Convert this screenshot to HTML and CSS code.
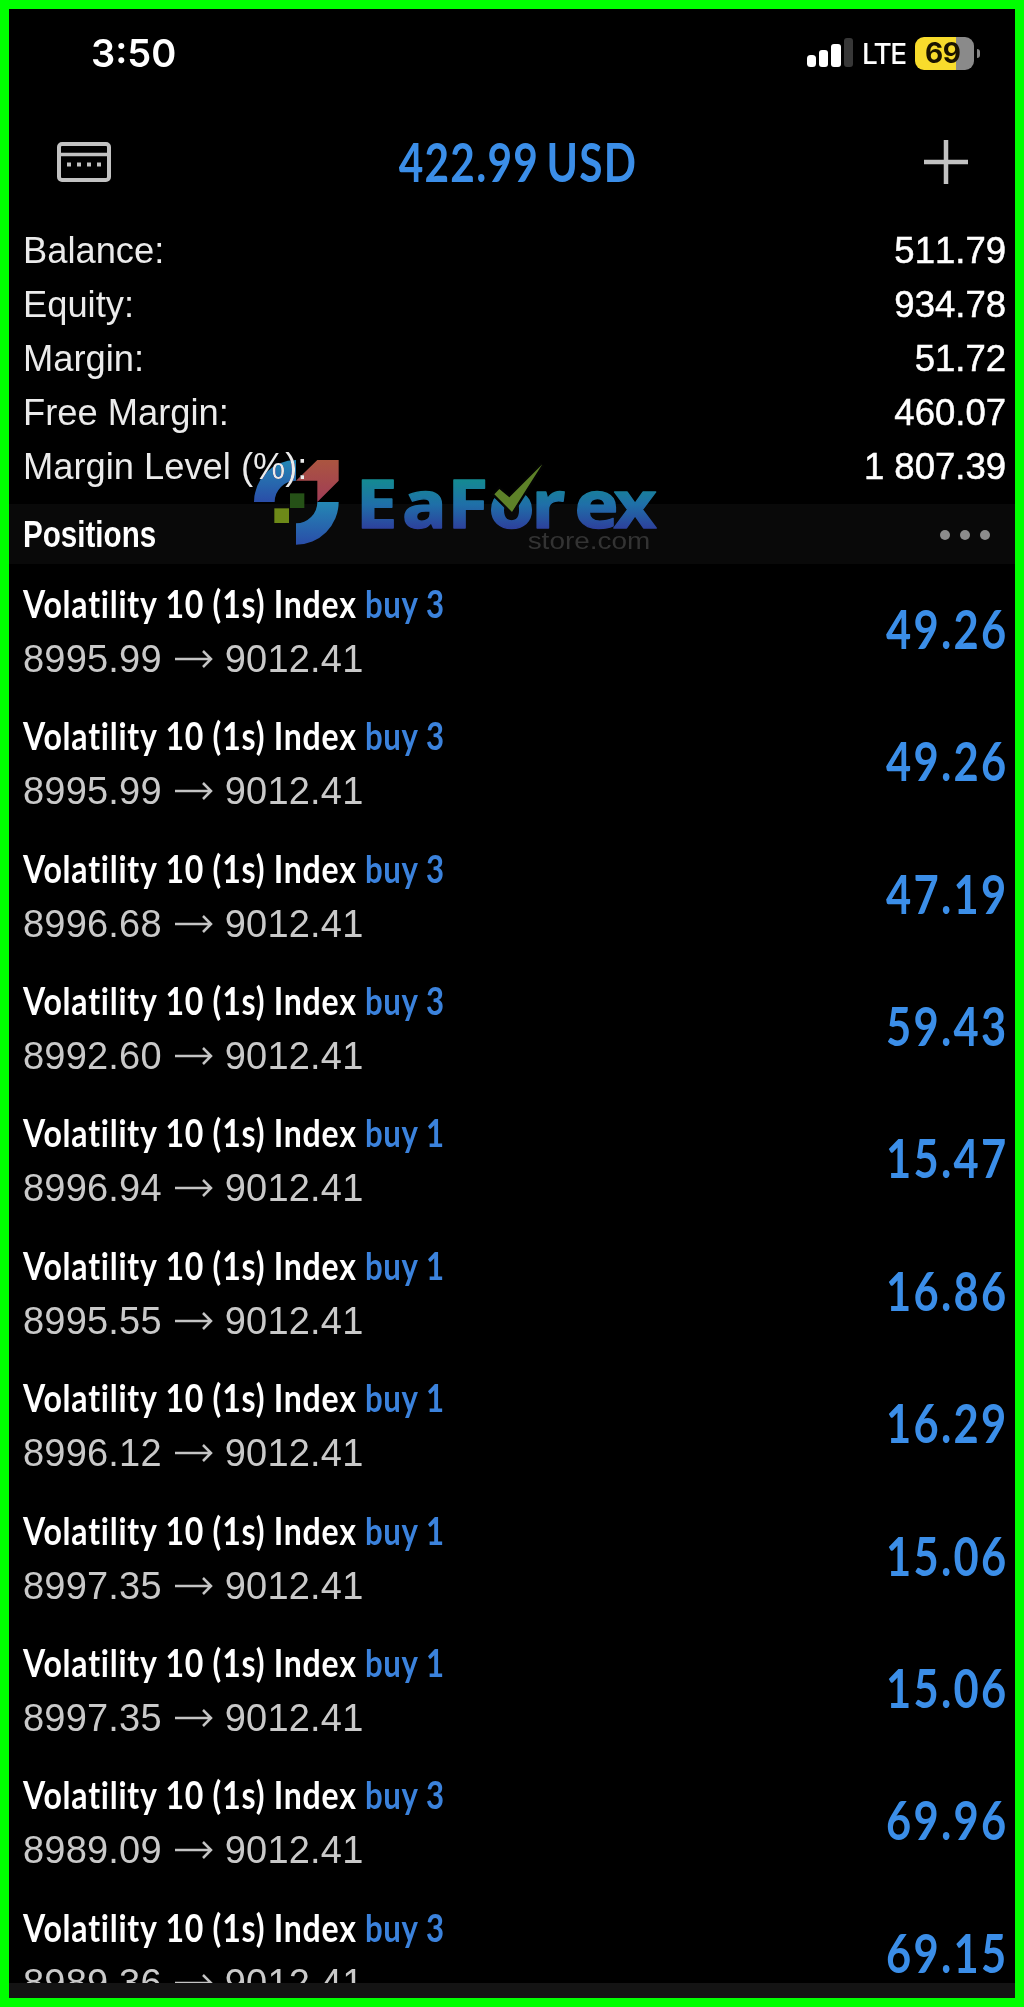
FILE: index.html
```html
<!DOCTYPE html>
<html lang="en">
<head>
  <meta charset="UTF-8" />
  <meta name="viewport" content="width=device-width, initial-scale=1.0" />
  <title>Trade</title>
  <link rel="stylesheet" href="styles.css">
</head>
<body>
  <div class="screen">
    <div class="status-bar">
      <span class="time">3:50</span>
      <div class="status-right">
        <svg class="signal" width="46" height="30" viewBox="0 0 46 30">
          <rect x="0" y="17" width="9" height="12" rx="3.5" fill="#fff"/>
          <rect x="12" y="12" width="9" height="17" rx="3" fill="#fff"/>
          <rect x="24" y="6" width="10" height="23" rx="3" fill="#fff"/>
          <rect x="37" y="0" width="9" height="29" rx="3" fill="#373737"/>
        </svg>
        <span class="lte">LTE</span>
        <div class="battery">69</div>
        <div class="battery-tip"></div>
      </div>
    </div>

    <div class="top-bar">
      <svg width="54" height="40" viewBox="0 0 54 40" fill="none" stroke="#c2c2c2">
        <rect x="2" y="2" width="50" height="36" rx="3" stroke-width="4"/>
        <path d="M3 12.5h48" stroke-width="3.5"/>
        <path d="M10 22.5h4M20 22.5h4M30 22.5h4M40 22.5h4" stroke-width="4"/>
      </svg>
      <span class="profit-total">422.99 USD</span>
      <svg width="44" height="44" viewBox="0 0 44 44" stroke="#c2c2c2" stroke-width="4.5">
        <path d="M22 0v44M0 22h44"/>
      </svg>
    </div>

    <div class="summary">
      <div class="summary-row"><span>Balance:</span><span class="value">511.79</span></div>
      <div class="summary-row"><span>Equity:</span><span class="value">934.78</span></div>
      <div class="summary-row"><span>Margin:</span><span class="value">51.72</span></div>
      <div class="summary-row"><span>Free Margin:</span><span class="value">460.07</span></div>
      <div class="summary-row"><span>Margin Level (%):</span><span class="value">1 807.39</span></div>
    </div>

    <div class="section-bar">
      <span class="section-title">Positions</span>
      <div class="dots"><i></i><i></i><i></i></div>
    </div>

    <div class="positions">
      <div class="position">
        <div class="info">
          <div class="name"><span>Volatility 10 (1s) Index</span><b>buy 3</b></div>
          <div class="price"><span>8995.99</span><svg class="arrow" viewBox="0 0 38 18"><path d="M0 9h36M28 1l8 8-8 8"/></svg><span>9012.41</span></div>
        </div>
        <div class="profit">49.26</div>
      </div>
      <div class="position">
        <div class="info">
          <div class="name"><span>Volatility 10 (1s) Index</span><b>buy 3</b></div>
          <div class="price"><span>8995.99</span><svg class="arrow" viewBox="0 0 38 18"><path d="M0 9h36M28 1l8 8-8 8"/></svg><span>9012.41</span></div>
        </div>
        <div class="profit">49.26</div>
      </div>
      <div class="position">
        <div class="info">
          <div class="name"><span>Volatility 10 (1s) Index</span><b>buy 3</b></div>
          <div class="price"><span>8996.68</span><svg class="arrow" viewBox="0 0 38 18"><path d="M0 9h36M28 1l8 8-8 8"/></svg><span>9012.41</span></div>
        </div>
        <div class="profit">47.19</div>
      </div>
      <div class="position">
        <div class="info">
          <div class="name"><span>Volatility 10 (1s) Index</span><b>buy 3</b></div>
          <div class="price"><span>8992.60</span><svg class="arrow" viewBox="0 0 38 18"><path d="M0 9h36M28 1l8 8-8 8"/></svg><span>9012.41</span></div>
        </div>
        <div class="profit">59.43</div>
      </div>
      <div class="position">
        <div class="info">
          <div class="name"><span>Volatility 10 (1s) Index</span><b>buy 1</b></div>
          <div class="price"><span>8996.94</span><svg class="arrow" viewBox="0 0 38 18"><path d="M0 9h36M28 1l8 8-8 8"/></svg><span>9012.41</span></div>
        </div>
        <div class="profit">15.47</div>
      </div>
      <div class="position">
        <div class="info">
          <div class="name"><span>Volatility 10 (1s) Index</span><b>buy 1</b></div>
          <div class="price"><span>8995.55</span><svg class="arrow" viewBox="0 0 38 18"><path d="M0 9h36M28 1l8 8-8 8"/></svg><span>9012.41</span></div>
        </div>
        <div class="profit">16.86</div>
      </div>
      <div class="position">
        <div class="info">
          <div class="name"><span>Volatility 10 (1s) Index</span><b>buy 1</b></div>
          <div class="price"><span>8996.12</span><svg class="arrow" viewBox="0 0 38 18"><path d="M0 9h36M28 1l8 8-8 8"/></svg><span>9012.41</span></div>
        </div>
        <div class="profit">16.29</div>
      </div>
      <div class="position">
        <div class="info">
          <div class="name"><span>Volatility 10 (1s) Index</span><b>buy 1</b></div>
          <div class="price"><span>8997.35</span><svg class="arrow" viewBox="0 0 38 18"><path d="M0 9h36M28 1l8 8-8 8"/></svg><span>9012.41</span></div>
        </div>
        <div class="profit">15.06</div>
      </div>
      <div class="position">
        <div class="info">
          <div class="name"><span>Volatility 10 (1s) Index</span><b>buy 1</b></div>
          <div class="price"><span>8997.35</span><svg class="arrow" viewBox="0 0 38 18"><path d="M0 9h36M28 1l8 8-8 8"/></svg><span>9012.41</span></div>
        </div>
        <div class="profit">15.06</div>
      </div>
      <div class="position">
        <div class="info">
          <div class="name"><span>Volatility 10 (1s) Index</span><b>buy 3</b></div>
          <div class="price"><span>8989.09</span><svg class="arrow" viewBox="0 0 38 18"><path d="M0 9h36M28 1l8 8-8 8"/></svg><span>9012.41</span></div>
        </div>
        <div class="profit">69.96</div>
      </div>
      <div class="position">
        <div class="info">
          <div class="name"><span>Volatility 10 (1s) Index</span><b>buy 3</b></div>
          <div class="price"><span>8989.36</span><svg class="arrow" viewBox="0 0 38 18"><path d="M0 9h36M28 1l8 8-8 8"/></svg><span>9012.41</span></div>
        </div>
        <div class="profit">69.15</div>
      </div>
    </div>

    <div class="tab-bar"></div>

    <svg class="watermark" viewBox="0 0 1320 390">
      <defs>
        <linearGradient id="blue" x1="0" y1="0" x2="0" y2="1">
          <stop offset="0" stop-color="#2488b4"/>
          <stop offset="1" stop-color="#2a4da8"/>
        </linearGradient>
        <linearGradient id="red" x1="0" y1="0" x2="0" y2="1">
          <stop offset="0" stop-color="#ab5540"/>
          <stop offset="1" stop-color="#a03c57"/>
        </linearGradient>
        <linearGradient id="word" gradientUnits="userSpaceOnUse" x1="0" y1="120" x2="0" y2="268">
          <stop offset="0" stop-color="#148a92"/>
          <stop offset="0.5" stop-color="#1f6fa8"/>
          <stop offset="1" stop-color="#2d3f9c"/>
        </linearGradient>
      </defs>
      <path d="M72 186A126 126 0 0 1 198 60V122A64 64 0 0 0 134 186Z" fill="url(#blue)"/>
      <path d="M262 60H326V122L262 186V122H198Z" fill="url(#red)"/>
      <path d="M326 186A128 128 0 0 1 198 314V250A64 64 0 0 0 262 186Z" fill="url(#blue)"/>
      <path d="M180 160h43v44h-43z" fill="#255117"/>
      <path d="M133 205h44v44h-44z" fill="#6d8918"/>
      <text class="brand" transform="scale(1.12 1)" x="337 461 582 692 808 922 1027" y="264" fill="url(#word)" stroke="url(#word)">EaForex</text>
      <path d="M775 140H860V172L846 216L793 172Z" fill="#000"/>
      <path d="M793 163L808 147L838 172L937 73L846 216Z" fill="#5d8128" stroke="#030303" stroke-width="14" paint-order="stroke"/>
      <text class="store" x="893" y="328" textLength="368" lengthAdjust="spacingAndGlyphs">store.com</text>
    </svg>
  </div>
</body>
</html>
```
FILE: styles.css
```css
* {
  box-sizing: border-box;
  margin: 0;
  padding: 0;
}

body {
  background: #00ff00;
}

.screen {
  position: relative;
  display: flex;
  flex-direction: column;
  width: 1024px;
  height: 2007px;
  border: 9px solid #00ff00;
  background: #000;
  color: #fff;
  font-family: "Liberation Sans", Arial, sans-serif;
  overflow: hidden;
}

.status-bar {
  display: flex;
  justify-content: space-between;
  height: 91px;
  padding: 20px 35px 0 82px;
  flex-shrink: 0;
}

.time {
  font: 600 38px/48px Inter, sans-serif;
}

.status-right {
  display: flex;
  align-items: center;
  height: 48px;
}

.lte {
  margin: 1px 0 0 9px;
  width: 53px;
  font: 500 28px/40px Inter, sans-serif;
  letter-spacing: -1.6px;
}

.battery {
  width: 59px;
  height: 33px;
  border-radius: 9px;
  background: linear-gradient(to right, #f8dc2c 70%, #8a8a8a 70%);
  color: #1a1400;
  font: 700 28px/33px Inter, sans-serif;
  letter-spacing: -0.5px;
  padding-left: 10px;
}

.battery-tip {
  width: 3px;
  height: 9px;
  margin-left: 3px;
  border-radius: 0 3px 3px 0;
  background: #858585;
}

.top-bar {
  display: flex;
  align-items: center;
  justify-content: space-between;
  height: 124px;
  padding: 0 47px 0 48px;
  flex-shrink: 0;
}

.profit-total {
  color: #3b8ee8;
  font: 700 53px/60px Lato, sans-serif;
  letter-spacing: 1.5px;
  word-spacing: -5px;
  transform: scaleX(0.8);
}

.summary {
  height: 280px;
  padding: 0 9px 0 14px;
  flex-shrink: 0;
}

.summary-row {
  display: flex;
  justify-content: space-between;
  height: 54px;
  line-height: 54px;
  font-size: 36.3px;
  color: #ebebeb;
}

.summary-row .value {
  font-size: 36.5px;
  color: #fff;
  font-kerning: none;
  -webkit-text-stroke: 0.5px #fff;
}

.section-bar {
  display: flex;
  align-items: center;
  justify-content: space-between;
  height: 60px;
  padding: 1px 25px 0 14px;
  background: #090909;
  flex-shrink: 0;
}

.section-title {
  font-size: 37px;
  font-weight: bold;
  transform: scaleX(0.8);
  transform-origin: left;
}

.dots {
  display: flex;
  gap: 10px;
}

.dots i {
  width: 10px;
  height: 10px;
  border-radius: 50%;
  background: #8c8c8c;
}

.positions {
  flex: 1;
  overflow: hidden;
}

.position {
  display: flex;
  justify-content: space-between;
  height: 132.36px;
  padding: 10px 8px 0 14px;
}

.name {
  display: flex;
  height: 58px;
  font: 700 38px/58px Lato, sans-serif;
  font-variant-ligatures: none;
  letter-spacing: 0.7px;
  white-space: nowrap;
}

.name span {
  width: 342px;
  letter-spacing: 0.9px;
  transform: scaleX(0.843);
  transform-origin: left;
}

.name b {
  font-weight: 700;
  color: #3b82dc;
  letter-spacing: 0.8px;
  transform: scaleX(0.82);
  transform-origin: left;
}

.price {
  display: flex;
  align-items: center;
  height: 54px;
  line-height: 54px;
  font-size: 38px;
  color: #c9c9c9;
}

.price span {
  letter-spacing: 0.2px;
}

.arrow {
  width: 38px;
  height: 18px;
  margin: 0 12px 0 13px;
  fill: none;
  stroke: #c4c4c4;
  stroke-width: 2.5;
}

.profit {
  padding-top: 25px;
  color: #3b8ee8;
  font: 700 53px/60px Lato, sans-serif;
  letter-spacing: 2.8px;
  margin-right: -2px;
  transform: scaleX(0.82);
  transform-origin: right;
}

.tab-bar {
  height: 15px;
  background: #141414;
  flex-shrink: 0;
}

/* logo lies over the summary and the section bar */
.watermark {
  position: absolute;
  left: 221px;
  top: 431px;
  width: 440px;
  height: 130px;
  mix-blend-mode: lighten;
}

.brand {
  font: 700 200px "Noto Sans", sans-serif;
  stroke-width: 4px;
  stroke-linejoin: round;
}

.store {
  font: 70px "Liberation Sans", Arial, sans-serif;
  fill: #333;
}
```
